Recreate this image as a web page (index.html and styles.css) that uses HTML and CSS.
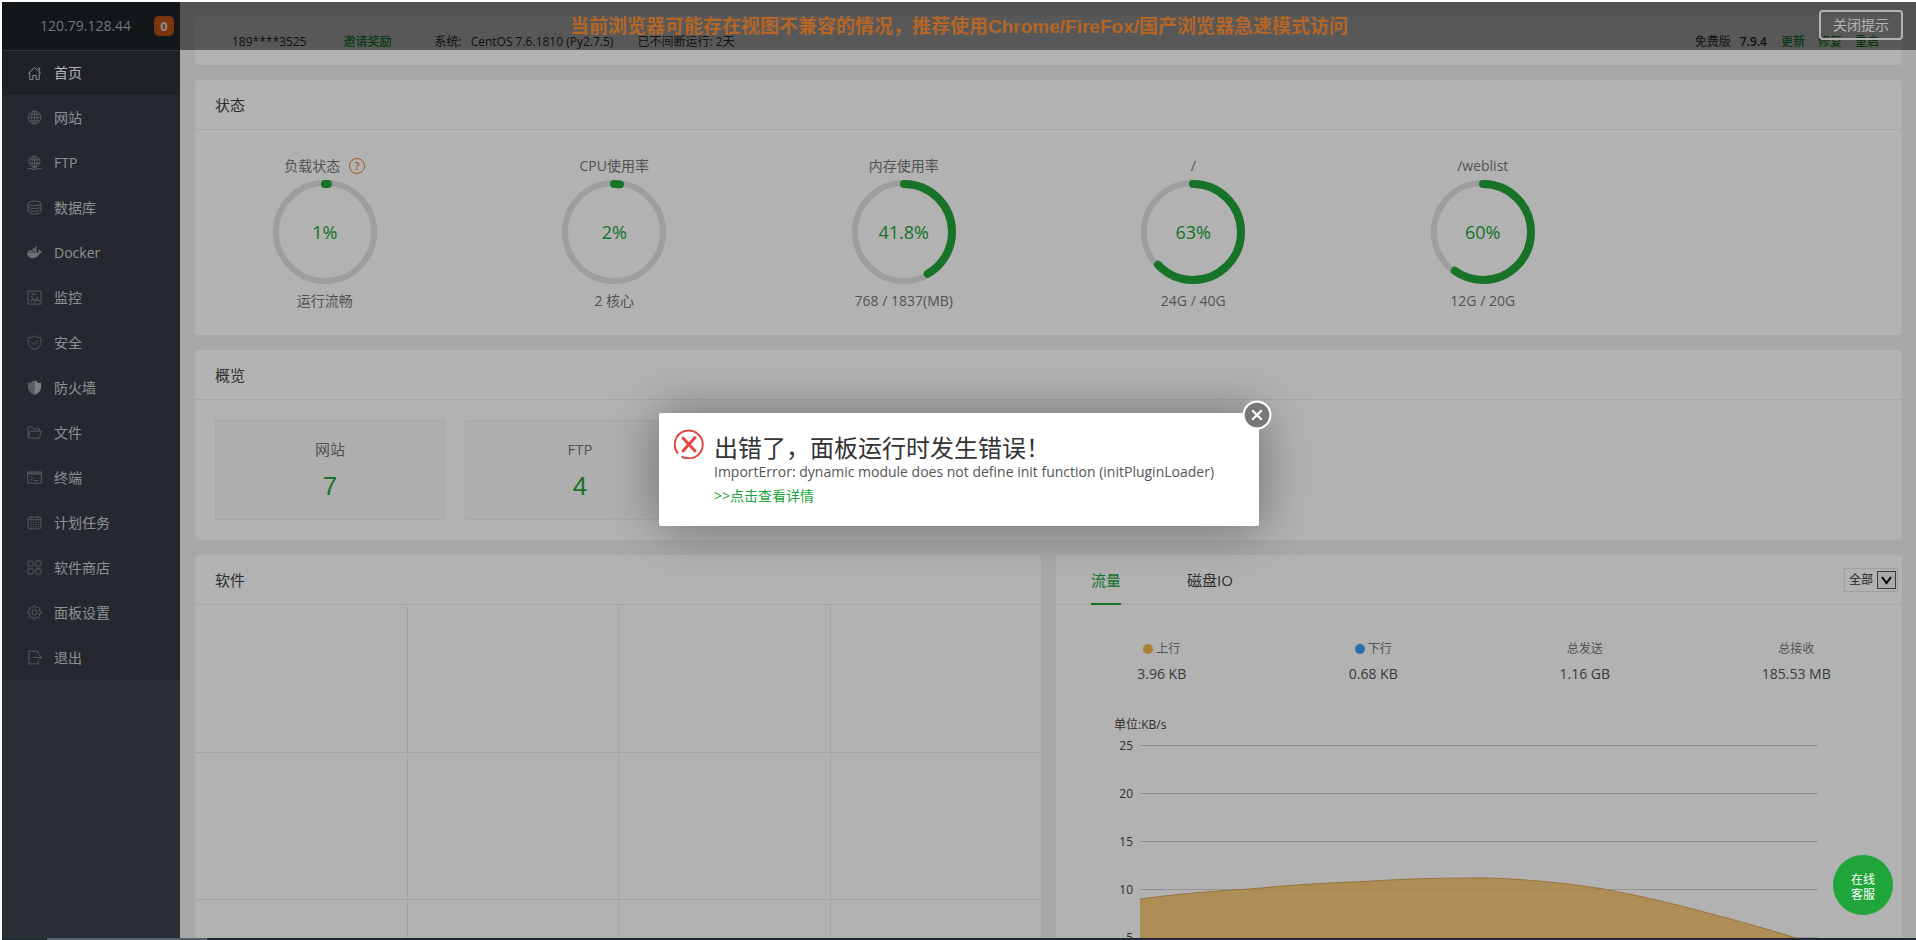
FILE: index.html
```html
<!DOCTYPE html>
<html lang="zh-CN">
<head>
<meta charset="utf-8">
<title>面板</title>
<link rel="stylesheet" href="styles.css">
</head>
<body>
<div class="app">
  <aside class="sidebar">
    <div class="host"><span class="host-ip">120.79.128.44</span><span class="host-badge">0</span></div>
    <nav class="nav">
      <a class="nav-item active" href="#"><svg class="icon" viewBox="0 0 16 16"><path d="M1 8.2 8 1.5l7 6.7M11.5 2.2h2v3.2M3 7v7.5h3.2V10h3.6v4.5H13V7"/></svg>首页</a>
      <a class="nav-item" href="#"><svg class="icon" viewBox="0 0 16 16"><circle cx="8" cy="8" r="6.8"/><ellipse cx="8" cy="8" rx="3.2" ry="6.8"/><path d="M8 1.2v13.6M1.2 8h13.6M2.3 4.6h11.4M2.3 11.4h11.4"/></svg>网站</a>
      <a class="nav-item" href="#"><svg class="icon" viewBox="0 0 16 16"><circle cx="8" cy="7" r="5.8"/><ellipse cx="8" cy="7" rx="2.7" ry="5.8"/><path d="M8 1.2v12M2.5 5h11M2.5 9h11M0 14.5h5.5M10.5 14.5H16M6 13.5h4v2H6z"/></svg>FTP</a>
      <a class="nav-item" href="#"><svg class="icon" viewBox="0 0 16 16"><ellipse cx="8" cy="3.6" rx="6.8" ry="2.6"/><path d="M1.2 3.6v8.8c0 1.4 3 2.6 6.8 2.6s6.8-1.2 6.8-2.6V3.6M1.2 6.6c0 1.4 3 2.6 6.8 2.6s6.8-1.2 6.8-2.6M1.2 9.6c0 1.4 3 2.6 6.8 2.6s6.8-1.2 6.8-2.6"/></svg>数据库</a>
      <a class="nav-item" href="#"><svg class="icon solid" viewBox="0 0 16 16"><path d="M0 8h11.6c.7 0 1-.3 1.1-.9-.5-.9-.3-1.7.3-2.4.7.5 1 1 1 1.7.7-.1 1.4 0 2 .4-.3.9-1.1 1.4-2.2 1.4C12.400 12 10 14 6.400 14 2.500 14 0 12.200 0 8zM1.500 5.700h1.800v1.700H1.500zM3.800 5.700h1.800v1.700H3.800zM6.100 5.700h1.800v1.700H6.100zM8.400 5.700h1.800v1.700H8.400zM6.100 3.500h1.800v1.700H6.100zM8.400 3.500h1.800v1.700H8.400zM8.400 1.300h1.800V3H8.400z"/></svg>Docker</a>
      <a class="nav-item" href="#"><svg class="icon" viewBox="0 0 16 16"><path d="M1 1h14v14H1zM5 4.500h5M3 11.500h2l1.500-3 2 4L10.500 8l1.500 3.500h2M4 7h2"/></svg>监控</a>
      <a class="nav-item" href="#"><svg class="icon" viewBox="0 0 16 16"><path d="M8 .8c2 1.400 4.200 2 6.800 2v5c0 3.600-2.600 6-6.800 7.600C3.800 13.800 1.200 11.400 1.200 7.800v-5c2.600 0 4.800-.6 6.800-2zM4.800 7.800l2.500 2.500 4.400-4.600"/></svg>安全</a>
      <a class="nav-item" href="#"><svg class="icon solid" viewBox="0 0 16 16"><path class="half" d="M8 .5 4.500 2v1L1 3v5c0 3.500 2.500 6 7 8z"/><path class="bright" d="M8 .5v15.500c4.500-2 7-4.500 7-8V3l-3.500.2V2z"/></svg>防火墙</a>
      <a class="nav-item" href="#"><svg class="icon" viewBox="0 0 16 16"><path d="M1.200 14V2h4.600l1.500 2h6v2.500M1.200 14 3.600 6.500h11.800L13.200 14z"/></svg>文件</a>
      <a class="nav-item" href="#"><svg class="icon" viewBox="0 0 16 16"><path d="M.7 2h14.600v12H.7zM.7 4.300h14.600M.7 3.200h14.600M3.500 7l2.700 2-2.700 2M7.500 11.200h4"/></svg>终端</a>
      <a class="nav-item" href="#"><svg class="icon" viewBox="0 0 16 16"><rect x="1.200" y="2.300" width="13.600" height="12.400" rx="1.500"/><path d="M4.500.8v2.700M11.500.8v2.700M1.200 5h13.600"/><path stroke-dasharray="1.300 1.300" d="M3.500 7.500h9.500M3.500 10h9.500M3.500 12.400h9.500"/></svg>计划任务</a>
      <a class="nav-item" href="#"><svg class="icon" viewBox="0 0 16 16"><rect x="1" y="1" width="5.600" height="5.600" rx="1"/><rect x="9.400" y="1" width="5.600" height="5.600" rx="1"/><rect x="1" y="9.400" width="5.600" height="5.600" rx="1"/><rect x="9.400" y="9.400" width="5.600" height="5.600" rx="1"/></svg>软件商店</a>
      <a class="nav-item" href="#"><svg class="icon" viewBox="0 0 16 16"><circle cx="8" cy="8" r="2.600"/><path d="m6.800 1-.4 1.900-1.300.6-1.700-1-1.600 1.600 1 1.700-.5 1.200L.8 7v2l1.700.3.500 1.300-1 1.600 1.600 1.600 1.600-1 1.300.5.400 1.700h2l.4-1.700 1.300-.5 1.600 1 1.600-1.600-1-1.600.5-1.300 1.900-.3V7l-1.900-.4-.5-1.200 1-1.700-1.600-1.600-1.700 1-1.300-.6L9 1z"/></svg>面板设置</a>
      <a class="nav-item" href="#"><svg class="icon" viewBox="0 0 16 16"><path d="M12 4.500V1.200H2v13.600h10v-3.300M6.500 8h9M12.800 5.500 15.500 8l-2.700 2.500"/></svg>退出</a>
    </nav>
  </aside>

  <main class="main">
    <section class="panel info">
      <span class="account">189****3525</span>
      <a class="link invite" href="#">邀请奖励</a>
      <span class="system"><span>系统:</span><span>CentOS 7.6.1810 (Py2.7.5)</span></span>
      <span>已不间断运行: 2天</span>
      <span class="edition"><span>免费版</span><b>7.9.4</b></span>
      <span class="actions"><a class="link" href="#">更新</a><a class="link" href="#">修复</a><a class="link" href="#">重启</a></span>
    </section>

    <section class="panel">
      <h2 class="panel-title">状态</h2>
      <div class="gauges">
        <div class="gauge"><div class="gauge-name">负载状态<span class="help">?</span></div>
          <div class="ring"><svg viewBox="0 0 104 104"><circle class="track" cx="52" cy="52" r="49"/><circle class="value" cx="52" cy="52" r="48" pathLength="100" stroke-dasharray="1 99"/></svg><span>1%</span></div><div class="gauge-note">运行流畅</div></div>
        <div class="gauge"><div class="gauge-name">CPU使用率</div>
          <div class="ring"><svg viewBox="0 0 104 104"><circle class="track" cx="52" cy="52" r="49"/><circle class="value" cx="52" cy="52" r="48" pathLength="100" stroke-dasharray="2 98"/></svg><span>2%</span></div><div class="gauge-note">2 核心</div></div>
        <div class="gauge"><div class="gauge-name">内存使用率</div>
          <div class="ring"><svg viewBox="0 0 104 104"><circle class="track" cx="52" cy="52" r="49"/><circle class="value" cx="52" cy="52" r="48" pathLength="100" stroke-dasharray="41.800 58.200"/></svg><span>41.8%</span></div><div class="gauge-note">768 / 1837(MB)</div></div>
        <div class="gauge"><div class="gauge-name">/</div>
          <div class="ring"><svg viewBox="0 0 104 104"><circle class="track" cx="52" cy="52" r="49"/><circle class="value" cx="52" cy="52" r="48" pathLength="100" stroke-dasharray="63 37"/></svg><span>63%</span></div><div class="gauge-note">24G / 40G</div></div>
        <div class="gauge"><div class="gauge-name">/weblist</div>
          <div class="ring"><svg viewBox="0 0 104 104"><circle class="track" cx="52" cy="52" r="49"/><circle class="value" cx="52" cy="52" r="48" pathLength="100" stroke-dasharray="60 40"/></svg><span>60%</span></div><div class="gauge-note">12G / 20G</div></div>
      </div>
    </section>

    <section class="panel">
      <h2 class="panel-title">概览</h2>
      <div class="cards">
        <a class="card" href="#"><span>网站</span><strong>7</strong></a>
        <a class="card" href="#"><span>FTP</span><strong>4</strong></a>
      </div>
    </section>

    <div class="columns">
      <section class="panel">
        <h2 class="panel-title">软件</h2>
        <div class="software">
          <i></i><i></i><i></i><i></i><i></i><i></i><i></i><i></i><i></i><i></i><i></i><i></i>
        </div>
      </section>
      <section class="panel">
        <div class="tabs">
          <button class="tab on" type="button">流量</button>
          <button class="tab" type="button">磁盘IO</button>
          <div class="picker">
            <select aria-label="网卡"><option>全部</option></select>
            <svg viewBox="0 0 19 18"><rect x=".5" y=".5" width="18" height="17"/><path d="m5 6 4.500 6L14 6"/></svg>
          </div>
        </div>
        <div class="stats">
          <div><span class="stat-name"><i class="dot up"></i>上行</span><span class="stat-value">3.96 KB</span></div>
          <div><span class="stat-name"><i class="dot down"></i>下行</span><span class="stat-value">0.68 KB</span></div>
          <div><span class="stat-name">总发送</span><span class="stat-value">1.16 GB</span></div>
          <div><span class="stat-name">总接收</span><span class="stat-value">185.53 MB</span></div>
        </div>
        <div class="chart">
          <div class="unit">单位:KB/s</div>
          <div class="plot">
            <div class="axis"><span>25</span><span>20</span><span>15</span><span>10</span><span>5</span></div>
            <svg viewBox="0 0 678 240" preserveAspectRatio="none">
              <path class="grid" d="M0 .5h678M0 48.500h678M0 96.500h678M0 144.500h678M0 192.500h678M0 239.500h678"/>
              <path class="area" d="M0 154C37 149 72 146 110 144C148 140 185 138 223 136.500C261 134 298 133 336 133C348 133 359 133 370 134C403 136 435 139 466 144.500C501 151 535 159 568 168C598 176 627 184 653 192L678 201V240H0z"/>
              <path class="line" d="M0 154C37 149 72 146 110 144C148 140 185 138 223 136.500C261 134 298 133 336 133C348 133 359 133 370 134C403 136 435 139 466 144.500C501 151 535 159 568 168C598 176 627 184 653 192L678 201"/>
            </svg>
          </div>
        </div>
      </section>
    </div>
  </main>

  <div class="notice">
    <p>当前浏览器可能存在视图不兼容的情况，推荐使用Chrome/FireFox/国产浏览器急速模式访问</p>
    <button type="button">关闭提示</button>
  </div>
  <div class="shade"></div>
  <div class="modal" role="alertdialog" aria-labelledby="err">
    <svg class="modal-icon" viewBox="0 0 30 30"><path d="M4 24.500A14 14 0 1 1 7.500 27.500M7.500 27.500Q11 29.500 15 29"/><path class="cross" d="m9 9 12 13M21 8.500 9 22"/></svg>
    <div>
      <h3 id="err">出错了，面板运行时发生错误！</h3>
      <p>ImportError: dynamic module does not define init function (initPluginLoader)</p>
      <a class="more" href="#">&gt;&gt;点击查看详情</a>
    </div>
    <button class="close" type="button" aria-label="关闭"><svg viewBox="0 0 28 28"><circle cx="14" cy="14" r="12.500"/><path d="m9.500 9.500 9 9M18.500 9.500l-9 9"/></svg></button>
  </div>
  <button class="service" type="button">在线<br>客服</button>
</div>
<div class="taskbar"><i></i></div>
</body>
</html>
```
FILE: styles.css
```css
* { box-sizing: border-box; }
body {
  margin: 0;
  height: 100vh;
  padding: 2px 0 0 2px;
  display: flex;
  flex-direction: column;
  overflow: hidden;
  background: #fff;
  color: #555;
  font: 14px/20px "Open Sans", "Noto Sans CJK SC", sans-serif;
}
button, select { font: inherit; color: inherit; }
button { cursor: pointer; }
a { color: inherit; text-decoration: none; }
h2, h3, p { margin: 0; font-weight: 400; }

.app {
  position: relative;
  flex: 1;
  min-height: 0;
  display: flex;
  overflow: hidden;
  background: #f1f1f1;
}
.taskbar { flex: none; height: 2px; background: #1f2a36; }
.taskbar i { display: block; width: 160px; height: 2px; margin-left: 45px; background: #56606a; }

/* Sidebar */
.sidebar { position: relative; z-index: 2; flex: none; width: 178px; background: #3c444d; }
.host {
  height: 48px;
  padding: 0 6px 0 38px;
  display: flex;
  align-items: center;
  justify-content: space-between;
  background: #1d2124;
  color: #a5a8aa;
}
.host-badge {
  width: 20px;
  border-radius: 5px;
  background: #b04c16;
  color: #c4c4c4;
  font-weight: 700;
  font-size: 13px;
  text-align: center;
}
.nav { background: #363c44; }
.nav-item {
  height: 45px;
  padding-left: 25px;
  display: flex;
  align-items: center;
  gap: 12px;
  color: #cacdd0;
}
.nav-item.active { background: #2c3037; color: #fff; border-top: 1px solid #43484e; }
.icon { width: 15px; height: 15px; fill: none; stroke: #7e8388; stroke-width: 1; }
.active .icon { stroke: #d0d3d6; }
.icon.solid { fill: #a0a4a8; stroke: none; }
.half { fill: #83878b; }
.bright { fill: #b4b7ba; }

/* Content */
.main {
  flex: 1;
  min-width: 0;
  padding: 13px 14px 0 15px;
  display: flex;
  flex-direction: column;
  gap: 15px;
  overflow: hidden;
}
.panel { flex: none; min-width: 0; border-radius: 4px; background: #fff; }
.panel-title {
  height: 50px;
  padding: 0 20px;
  border-bottom: 1px solid #eee;
  color: #444;
  font-size: 15px;
  line-height: 50px;
}
.info { display: flex; height: 50px; padding: 4px 23px 0 37px; align-items: center; font-size: 12px; color: #333; }
.info b { font-weight: 600; }
.link { color: #20a53a; font-weight: 500; }
.invite { margin: 0 43px 0 37px; }
.system { display: flex; gap: 9px; margin-right: 24px; }
.edition { display: flex; gap: 9px; margin-left: auto; }
.actions { display: flex; gap: 13px; margin-left: 14px; }

.gauges {
  display: grid;
  grid-template-columns: repeat(6, 1fr);
  margin: 0 -15px;
  padding: 26px 0 24px;
  text-align: center;
  color: #777;
}
.gauge-name { display: flex; justify-content: center; align-items: center; gap: 9px; }
.help {
  width: 16px;
  height: 16px;
  border: 1px solid #e8832c;
  border-radius: 50%;
  color: #e8832c;
  font-size: 11px;
  font-weight: 600;
  line-height: 14px;
}
.ring { display: grid; justify-content: center; align-items: center; margin: 4px 0 7px; color: #20a53a; font-size: 18px; }
.ring > * { grid-area: 1 / 1; }
.ring svg { width: 104px; height: 104px; fill: none; transform: rotate(-90deg); }
.track { stroke: #e2e2e2; stroke-width: 6; }
.value { stroke: #20a53a; stroke-width: 8; stroke-linecap: round; }

.cards { display: flex; gap: 20px; padding: 20px; }
.card {
  width: 230px;
  height: 100px;
  padding-top: 18px;
  display: flex;
  flex-direction: column;
  align-items: center;
  gap: 12px;
  border: 1px solid #efefef;
  background: #fafafa;
  color: #777;
  font-size: 15px;
}
.card strong { color: #20a53a; font: 26px/30px "Liberation Sans", sans-serif; }

.columns { display: grid; grid-template-columns: 1fr 1fr; gap: 15px; }
.software { display: grid; grid-template-columns: repeat(4, 1fr); grid-auto-rows: 147px; padding-top: 1px; }
.software i { border: solid #ebebeb; border-width: 0 0 1px 1px; }
.software i:nth-child(4n+1) { border-left: 0; }

.tabs { display: flex; height: 50px; padding: 0 4px 0 35px; gap: 66px; border-bottom: 1px solid #eee; }
.tab { height: 50px; padding: 2px 0 0; border: 0; border-bottom: 2px solid transparent; background: none; color: #444; font-size: 15px; }
.tab.on { border-color: #20a53a; color: #20a53a; }
.picker { position: relative; align-self: center; margin-left: auto; color: #333; }
.picker select {
  display: block;
  width: 54px;
  height: 24px;
  padding: 0 0 0 4px;
  border: 1px solid #e4e4e4;
  background: #fff;
  font-size: 12px;
  appearance: none;
}
.picker svg { position: absolute; right: 2px; top: 3px; width: 19px; height: 18px; fill: #f4f4f4; stroke: #555; pointer-events: none; }
.picker path { fill: none; stroke: #000; stroke-width: 2; }

.stats { display: grid; grid-template-columns: repeat(4, 1fr); padding-top: 34px; text-align: center; }
.stats > div { display: flex; flex-direction: column; gap: 5px; }
.stat-name { display: flex; justify-content: center; align-items: center; gap: 3px; color: #777; font-size: 12px; }
.dot { width: 10px; height: 10px; border-radius: 50%; }
.up { background: #f7b851; }
.down { background: #3fa0f5; }

.chart { padding: 31px 84px 20px 58px; color: #444; font-size: 12px; }
.plot { display: grid; grid-template-columns: 19px 1fr; column-gap: 7px; padding-top: 10px; }
.axis { display: grid; grid-auto-rows: 48px; margin-top: -9px; text-align: right; }
.plot svg { width: 100%; height: 240px; }
.grid { stroke: #d2d2d2; vector-effect: non-scaling-stroke; }
.area { fill: #f7b851; fill-opacity: .75; }
.line { fill: none; stroke: #dba65a; vector-effect: non-scaling-stroke; }

/* Layers above the page */
.notice {
  position: absolute;
  z-index: 1;
  top: 0;
  left: 0;
  right: 0;
  height: 48px;
  background: rgba(0, 0, 0, .5);
  text-align: center;
}
.notice p {
  padding-top: 14px;
  color: #ff9238;
  font: 700 19px/22px "Liberation Sans", "Noto Sans CJK SC", sans-serif;
}
.notice button {
  position: absolute;
  top: 8px;
  right: 13px;
  width: 84px;
  height: 30px;
  padding: 0;
  border: 2px solid #fff;
  border-radius: 4px;
  background: none;
  color: #fff;
}
.shade { position: absolute; z-index: 3; inset: 0; background: rgba(0, 0, 0, .3); }
.modal {
  position: absolute;
  z-index: 4;
  top: 411px;
  left: 50%;
  width: 600px;
  margin-left: -300px;
  padding: 16px 20px 20px 15px;
  display: flex;
  gap: 10px;
  border-radius: 2px;
  background: #fff;
  box-shadow: 1px 1px 50px rgba(0, 0, 0, .4);
}
.modal-icon { flex: none; width: 30px; height: 30px; fill: none; stroke: #e04a42; stroke-width: 2; }
.modal-icon .cross { stroke-width: 3; stroke-linecap: round; }
.modal h3 { padding-top: 6px; color: #333; font-size: 24px; line-height: 26px; }
.modal p { line-height: 22px; }
.more { display: block; padding-top: 2px; color: #20a53a; line-height: 21px; }
.close { position: absolute; top: -13px; right: -13px; width: 30px; height: 30px; padding: 0; border: 0; background: none; }
.close svg { display: block; fill: #777; stroke: #fff; stroke-width: 2; }
.service {
  position: absolute;
  z-index: 5;
  right: 23px;
  bottom: 23px;
  width: 60px;
  height: 60px;
  padding: 4px 0 0;
  border: 0;
  border-radius: 50%;
  background: #20a53a;
  color: #fff;
  font-size: 12px;
  line-height: 15px;
}
```
